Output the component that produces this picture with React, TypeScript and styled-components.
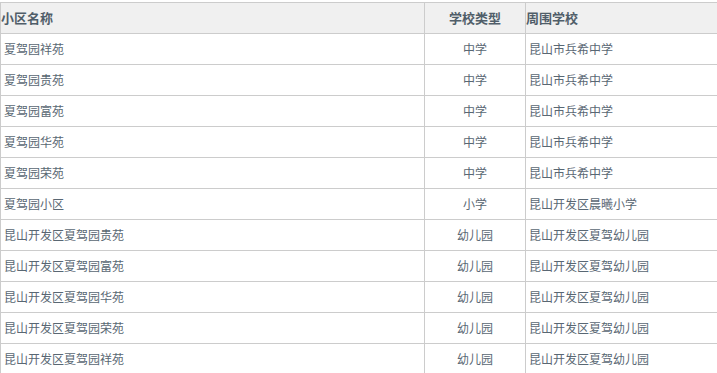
import React from "react";
import styled, { createGlobalStyle } from "styled-components";

type Row = {
  name: string
  type: string
  school: string
}

const rows: Row[] = [
  { name: "夏驾园祥苑", type: "中学", school: "昆山市兵希中学" },
  { name: "夏驾园贵苑", type: "中学", school: "昆山市兵希中学" },
  { name: "夏驾园富苑", type: "中学", school: "昆山市兵希中学" },
  { name: "夏驾园华苑", type: "中学", school: "昆山市兵希中学" },
  { name: "夏驾园荣苑", type: "中学", school: "昆山市兵希中学" },
  { name: "夏驾园小区", type: "小学", school: "昆山开发区晨曦小学" },
  { name: "昆山开发区夏驾园贵苑", type: "幼儿园", school: "昆山开发区夏驾幼儿园" },
  { name: "昆山开发区夏驾园富苑", type: "幼儿园", school: "昆山开发区夏驾幼儿园" },
  { name: "昆山开发区夏驾园华苑", type: "幼儿园", school: "昆山开发区夏驾幼儿园" },
  { name: "昆山开发区夏驾园荣苑", type: "幼儿园", school: "昆山开发区夏驾幼儿园" },
  { name: "昆山开发区夏驾园祥苑", type: "幼儿园", school: "昆山开发区夏驾幼儿园" },
]

const GlobalStyle = createGlobalStyle`
  html, body {
    margin: 0;
    padding: 0;
    background: #fff;
    overflow: hidden;
  }
  body {
    font-family: "Noto Sans CJK SC", "Liberation Sans", sans-serif;
  }
`

const Wrap = styled.div`
  padding-top: 2px;
  width: 717px;
  overflow: hidden;
`

const Table = styled.table`
  border-collapse: collapse;
  table-layout: fixed;
  width: 780px;
  color: #596773;
`

const Head = styled.th<{ $center?: boolean }>`
  height: 30px;
  padding: 0;
  background: #f0f0f0;
  border: 1px solid #cccccc;
  font-size: 13px;
  font-weight: bold;
  color: #505e69;
  text-align: ${(p) => (p.$center ? "center" : "left")};
  vertical-align: middle;
  line-height: 16px;
`

const Cell = styled.td<{ $center?: boolean }>`
  height: 30px;
  padding: 0 0 0 3px;
  border: 1px solid #cccccc;
  font-size: 12px;
  text-align: ${(p) => (p.$center ? "center" : "left")};
  vertical-align: middle;
  line-height: 14px;
  white-space: nowrap;
  ${(p) => (p.$center ? "padding: 0;" : "")}
`

const App = () => {
  return (
    <Wrap>
      <GlobalStyle />
      <Table>
        <colgroup>
          <col style={{ width: 424 }} />
          <col style={{ width: 101 }} />
          <col />
        </colgroup>
        <thead>
          <tr>
            <Head>小区名称</Head>
            <Head $center>学校类型</Head>
            <Head>周围学校</Head>
          </tr>
        </thead>
        <tbody>
          {rows.map((r, i) => (
            <tr key={i}>
              <Cell>{r.name}</Cell>
              <Cell $center>{r.type}</Cell>
              <Cell>{r.school}</Cell>
            </tr>
          ))}
        </tbody>
      </Table>
    </Wrap>
  )
}

export default App
